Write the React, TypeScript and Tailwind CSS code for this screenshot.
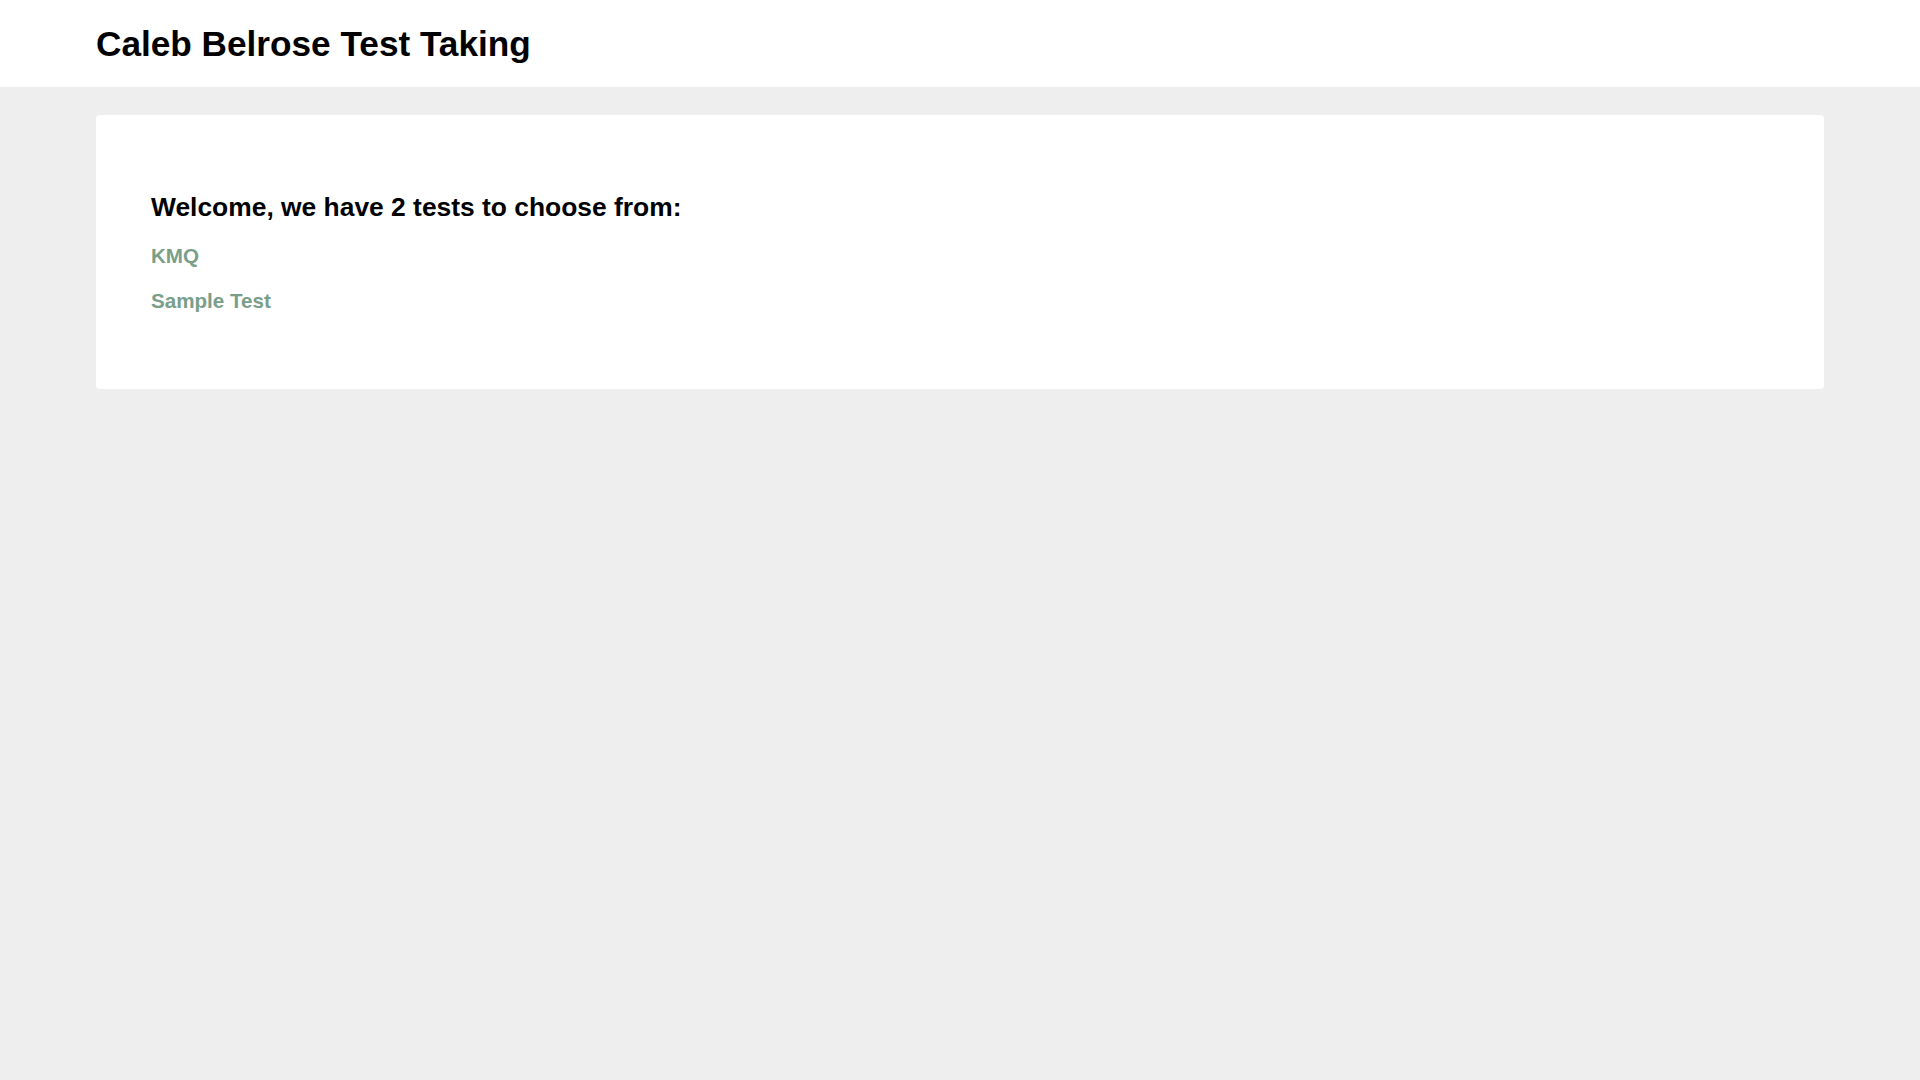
const tests = [
  { name: "KMQ", href: "#kmq" },
  { name: "Sample Test", href: "#sample-test" },
];

export default function App() {
  return (
    <div className="min-h-screen bg-[#eeeeee] font-['Liberation_Sans',Arial,sans-serif]">
      <header className="h-[87px] bg-white flex items-center px-[96px]">
        <h1 className="text-[35.2px] font-bold leading-[39px] text-black">
          Caleb Belrose Test Taking
        </h1>
      </header>

      <main className="px-[96px] pt-[28px]">
        <div className="bg-white rounded-[4px] pt-[77px] pb-[77px] px-[55px]">
          <h2 className="text-[26.4px] font-bold leading-[30px] text-black">
            Welcome, we have {tests.length} tests to choose from:
          </h2>
          <div className="mt-[22px] flex flex-col gap-[22px]">
            {tests.map((t) => (
              <a
                key={t.name}
                href={t.href}
                className="self-start text-[20.6px] font-bold leading-[23px] text-[#799e8a]"
              >
                {t.name}
              </a>
            ))}
          </div>
        </div>
      </main>
    </div>
  );
}
